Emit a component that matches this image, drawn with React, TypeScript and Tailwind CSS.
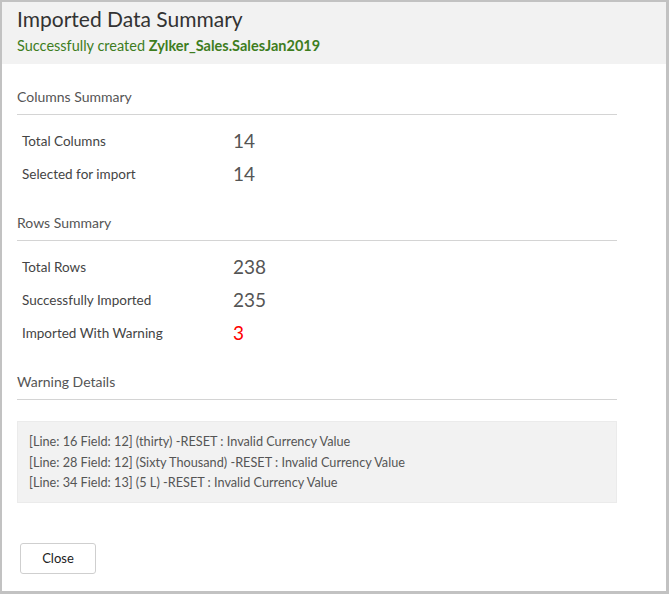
import React from "react";

const font = { fontFamily: "Lato, 'Open Sans', Arial, sans-serif" };

function Row({ label, value, warn }: { label: string; value: string; warn?: boolean }) {
  return (
    <div className="flex items-center h-[33px] pl-[5px]">
      <span className="w-[211px] text-[13.5px] text-[#444]">{label}</span>
      <span className={`text-[19px] ${warn ? "text-[#ff0000]" : "text-[#555]"}`}>{value}</span>
    </div>
  );
}

function Section({ title }: { title: string }) {
  return (
    <div className="w-[600px] border-b border-[#d4d4d4] pb-[7px] text-[14px] text-[#555]">
      {title}
    </div>
  );
}

const warnings = [
  "[Line: 16 Field: 12] (thirty) -RESET : Invalid Currency Value",
  "[Line: 28 Field: 12] (Sixty Thousand) -RESET : Invalid Currency Value",
  "[Line: 34 Field: 13] (5 L) -RESET : Invalid Currency Value",
];

export default function App() {
  return (
    <div
      className="w-[669px] h-[594px] bg-white border-t-2 border-l-2 border-r-[3px] border-b-[3px] border-[#c2c2c2] flex flex-col"
      style={font}
    >
      {/* header */}
      <div className="bg-[#f2f2f2] h-[62px] px-[15px] pt-[3px]">
        <div className="text-[21px] text-[#333] leading-[28px]">Imported Data Summary</div>
        <div className="text-[14.5px] text-[#3e7d1e] mt-[2px]">
          Successfully created <span className="font-bold">Zylker_Sales.SalesJan2019</span>
        </div>
      </div>

      <div className="px-[15px] pt-[22px]">
        <Section title="Columns Summary" />
        <div className="pt-[10px]">
          <Row label="Total Columns" value="14" />
          <Row label="Selected for import" value="14" />
        </div>

        <div className="mt-[21px]">
          <Section title="Rows Summary" />
        </div>
        <div className="pt-[10px]">
          <Row label="Total Rows" value="238" />
          <Row label="Successfully Imported" value="235" />
          <Row label="Imported With Warning" value="3" warn />
        </div>

        <div className="mt-[21px]">
          <Section title="Warning Details" />
        </div>

        <div className="mt-[21px] w-[600px] h-[82px] bg-[#f2f2f2] border border-[#ebebeb] px-[11px] pt-[9px] text-[12.7px] text-[#555] leading-[20.5px]">
          {warnings.map((w) => (
            <div key={w}>{w}</div>
          ))}
        </div>

        <button className="mt-[40px] ml-[3px] w-[76px] h-[31px] border border-[#cfcfcf] rounded-[3px] bg-white text-[13px] text-[#222]">
          Close
        </button>
      </div>
    </div>
  );
}
